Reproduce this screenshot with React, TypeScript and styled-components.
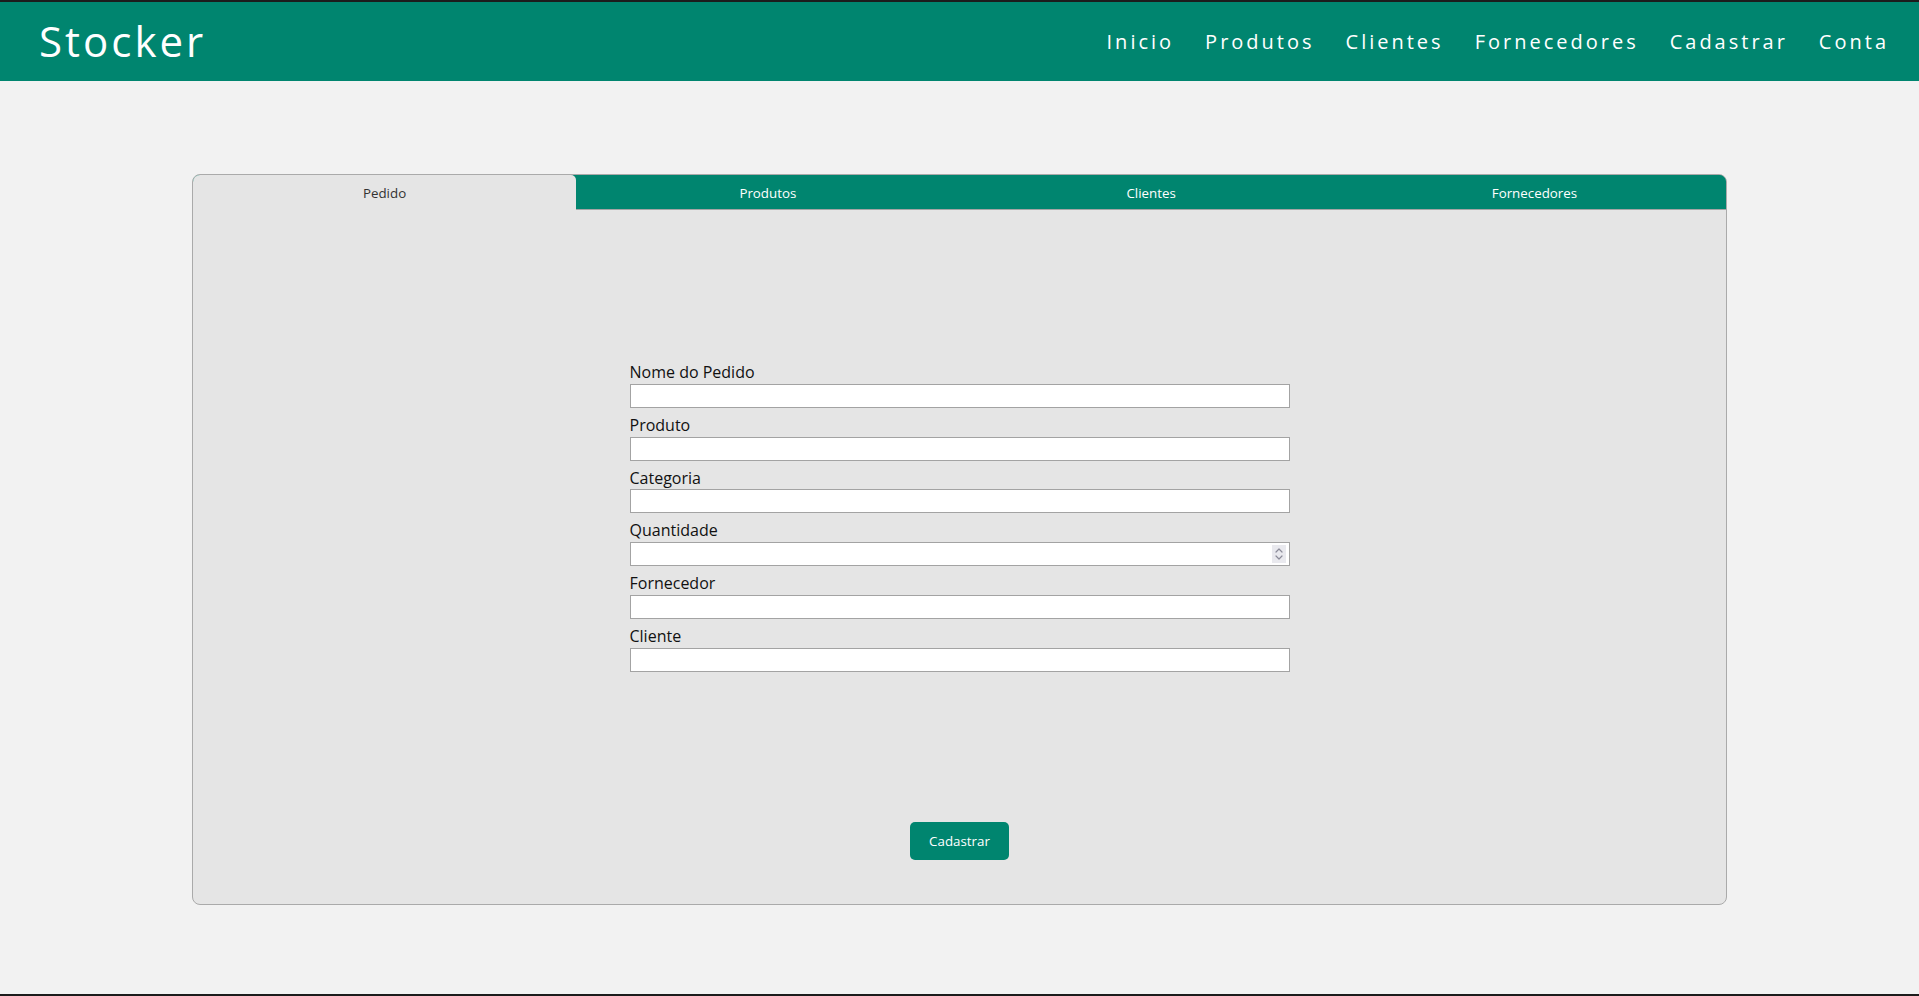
import React from "react";
import styled, { createGlobalStyle } from "styled-components";

const GlobalStyle = createGlobalStyle`
  html, body {
    margin: 0;
    padding: 0;
    background: #f2f2f2;
    font-family: "Open Sans", "Liberation Sans", sans-serif;
  }
  * { box-sizing: border-box; }
`;

const GREEN = "#00856f";

const Page = styled.div`
  min-height: 100vh;
  display: flex;
  flex-direction: column;
  background: #f2f2f2;
  border-top: 2px solid #1c1c1c;
  border-bottom: 2px solid #1c1c1c;
`;

const Header = styled.header`
  height: 79px;
  background: ${GREEN};
  display: flex;
  align-items: center;
  justify-content: space-between;
  padding: 0 30px 0 39px;
`;

const Logo = styled.div`
  font-family: "Open Sans", sans-serif;
  font-size: 42px;
  letter-spacing: 3px;
  color: #ffffff;
  line-height: 1;
  padding-bottom: 2px;
`;

const Nav = styled.nav`
  display: flex;
  align-items: center;
  gap: 31px;
`;

const NavLink = styled.a`
  font-family: "Open Sans", sans-serif;
  font-size: 20px;
  letter-spacing: 3px;
  color: #ffffff;
  text-decoration: none;
  cursor: pointer;
`;

const Main = styled.main`
  flex: 1;
  padding-top: 93px;
`;

const Card = styled.section`
  width: 80%;
  margin: 0 auto;
  background: #e5e5e5;
  border: 1px solid #aaaaaa;
  border-radius: 8px;
  overflow: hidden;
`;

const TabsBack = styled.div`
  background: ${GREEN};
`;

const Tabs = styled.div`
  display: grid;
  grid-template-columns: repeat(4, 1fr);
`;

const Tab = styled.button<{ $active?: boolean }>`
  height: 35px;
  border: none;
  border-bottom: 1px solid ${(p) => (p.$active ? "transparent" : "#a5a5a5")};
  border-top-right-radius: ${(p) => (p.$active ? "5px" : "0")};
  background: ${(p) => (p.$active ? "#e5e5e5" : GREEN)};
  color: ${(p) => (p.$active ? "#333333" : "#ffffff")};
  font-family: "Open Sans", sans-serif;
  font-size: 13.333px;
  padding: 2px 0 0;
  cursor: pointer;
`;

const Content = styled.div`
  display: flex;
  flex-direction: column;
  align-items: center;
  padding: 152px 0 44px;
`;

const Form = styled.form`
  width: 660px;
  display: flex;
  flex-direction: column;
  gap: 7px;
`;

const Field = styled.div`
  display: flex;
  flex-direction: column;
`;

const Label = styled.label`
  font-family: "Open Sans", sans-serif;
  font-size: 16px;
  line-height: 21.8px;
  color: #111111;
`;

const InputWrap = styled.div`
  position: relative;
  display: flex;
`;

const Input = styled.input`
  height: 24px;
  width: 100%;
  border: 1px solid #a3a3a3;
  background: #ffffff;
  font-family: "Open Sans", sans-serif;
  font-size: 13.333px;
  padding: 1px 4px;
  outline: none;
  -moz-appearance: textfield;

  &::-webkit-inner-spin-button,
  &::-webkit-outer-spin-button {
    -webkit-appearance: none;
    margin: 0;
  }
`;

const Spinner = styled.div`
  position: absolute;
  right: 4px;
  top: 3px;
  width: 14px;
  height: 18px;
  background: #e9e9ee;
  display: flex;
  align-items: center;
  justify-content: center;
  pointer-events: none;
`;

const SubmitButton = styled.button`
  margin-top: 150px;
  height: 38px;
  width: 99px;
  border: none;
  border-radius: 5px;
  background: ${GREEN};
  color: #ffffff;
  font-family: "Open Sans", sans-serif;
  font-size: 13.333px;
  cursor: pointer;
`;

const fields: { label: string; type: string }[] = [
  { label: "Nome do Pedido", type: "text" },
  { label: "Produto", type: "text" },
  { label: "Categoria", type: "text" },
  { label: "Quantidade", type: "number" },
  { label: "Fornecedor", type: "text" },
  { label: "Cliente", type: "text" },
];

const navItems = ["Inicio", "Produtos", "Clientes", "Fornecedores", "Cadastrar", "Conta"];
const tabs = ["Pedido", "Produtos", "Clientes", "Fornecedores"];

function SpinIcon() {
  return (
    <svg width="14" height="18" viewBox="0 0 14 18" fill="none">
      <path d="M4 7 L7 4 L10 7" stroke="#8b8b99" strokeWidth="1.2" strokeLinecap="round" strokeLinejoin="round" />
      <path d="M4 11 L7 14 L10 11" stroke="#8b8b99" strokeWidth="1.2" strokeLinecap="round" strokeLinejoin="round" />
    </svg>
  );
}

export default function App() {
  return (
    <>
      <GlobalStyle />
      <Page>
        <Header>
          <Logo>Stocker</Logo>
          <Nav>
            {navItems.map((n) => (
              <NavLink key={n}>{n}</NavLink>
            ))}
          </Nav>
        </Header>
        <Main>
          <Card>
            <TabsBack>
              <Tabs>
                {tabs.map((t, i) => (
                  <Tab key={t} $active={i === 0} type="button">
                    {t}
                  </Tab>
                ))}
              </Tabs>
            </TabsBack>
            <Content>
              <Form onSubmit={(e) => e.preventDefault()}>
                {fields.map((f) => (
                  <Field key={f.label}>
                    <Label>{f.label}</Label>
                    <InputWrap>
                      <Input type={f.type} />
                      {f.type === "number" && (
                        <Spinner>
                          <SpinIcon />
                        </Spinner>
                      )}
                    </InputWrap>
                  </Field>
                ))}
              </Form>
              <SubmitButton type="button">Cadastrar</SubmitButton>
            </Content>
          </Card>
        </Main>
      </Page>
    </>
  );
}
